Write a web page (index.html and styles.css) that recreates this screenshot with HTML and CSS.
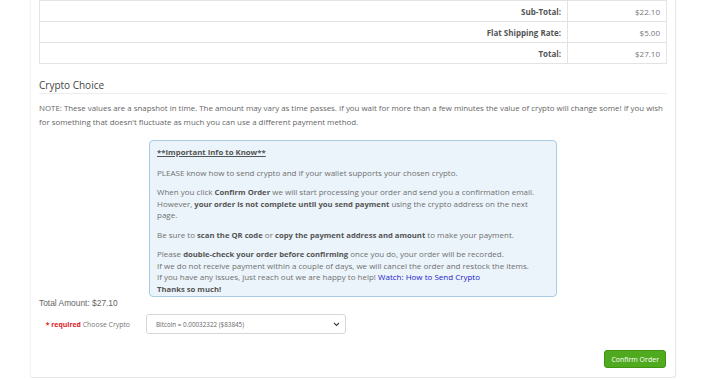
FILE: index.html
```html
<!DOCTYPE html>
<html lang="en">
<head>
    <meta charset="UTF-8" />
    <title>Checkout - Confirm Order</title>
    <link rel="stylesheet" href="styles.css">
</head>
<body>
    <div class="panel">
        <table class="totals">
            <tr>
                <td class="label">Sub-Total:</td>
                <td class="amount">$22.10</td>
            </tr>
            <tr>
                <td class="label">Flat Shipping Rate:</td>
                <td class="amount">$5.00</td>
            </tr>
            <tr>
                <td class="label">Total:</td>
                <td class="amount">$27.10</td>
            </tr>
        </table>

        <h3 class="section-title">Crypto Choice</h3>
        <p class="note">NOTE: These values are a snapshot in time. The amount may vary as time passes. If you wait for more than a few minutes the value of crypto will change some! If you wish for something that doesn't fluctuate as much you can use a different payment method.</p>

        <div class="info-box">
            <p class="info-title">**Important Info to Know**</p>
            <p>PLEASE know how to send crypto and if your wallet supports your chosen crypto.</p>
            <p>When you click <b>Confirm Order</b> we will start processing your order and send you a confirmation email. However, <b>your order is not complete until you send payment</b> using the crypto address on the next page.</p>
            <p>Be sure to <b>scan the QR code</b> or <b>copy the payment address and amount</b> to make your payment.</p>
            <p>Please <b>double-check your order before confirming</b> once you do, your order will be recorded.<br>
            If we do not receive payment within a couple of days, we will cancel the order and restock the items.<br>
            If you have any issues, just reach out we are happy to help! <a href="#">Watch: How to Send Crypto</a><br>
            <b>Thanks so much!</b></p>
        </div>

        <div class="total-amount">Total Amount: $27.10</div>

        <div class="form-row">
            <label class="form-label"><span class="required">* required</span> Choose Crypto</label>
            <div class="select-box">
                <span>Bitcoin = 0.00032322 ($83845)</span>
                <svg width="7" height="5" viewBox="0 0 7 5"><path d="M1 1l2.5 2.5L6 1" fill="none" stroke="#444" stroke-width="1.2"/></svg>
            </div>
        </div>

        <div class="buttons">
            <button class="btn-confirm">Confirm Order</button>
        </div>
    </div>
</body>
</html>
```

FILE: styles.css
```css
body, html {
    margin: 0;
    padding: 0;
    background: #ffffff;
    font-family: 'Open Sans', 'DejaVu Sans', sans-serif;
    color: #666;
    overflow: hidden;
}
.panel {
    width: 628px;
    margin-left: 30px;
    padding: 0 8px 9px 8px;
    border: 1px solid #e6e6e6;
    border-left-color: #f4f4f4;
    border-top: none;
    border-radius: 0 0 4px 4px;
    box-shadow: 0 1px 2px rgba(0, 0, 0, 0.05);
}
.totals {
    width: 100%;
    border-collapse: collapse;
    font-size: 8px;
}
.totals td {
    border: 1px solid #e3e3e3;
    height: 20px;
    padding: 0 6px;
    text-align: right;
}
.totals .label {
    font-weight: bold;
    color: #555;
}
.totals .amount {
    width: 86px;
    color: #777;
}
.section-title {
    margin: 14px 0 0 0;
    padding-bottom: 1px;
    font-size: 10px;
    font-weight: normal;
    color: #444;
    border-bottom: 1px solid #eeeeee;
}
.note {
    margin: 7px 0 0 0;
    font-size: 7.9px;
    line-height: 14px;
    color: #666;
}
.info-box {
    width: 392px;
    margin: 11px 0 0 110px;
    padding: 6px 7px 2px 7px;
    background: #ebf4fa;
    border: 1px solid #a9cce3;
    border-radius: 4px;
    font-size: 8px;
    line-height: 11.5px;
    color: #707070;
}
.info-box p {
    margin: 0 0 8px 0;
}
.info-box p:last-child {
    margin-bottom: 0;
}
.info-box b {
    font-size: 7.7px;
    line-height: 1;
    color: #555;
}
.info-box .info-title {
    font-size: 7.8px;
    font-weight: bold;
    text-decoration: underline;
    color: #555;
}
.info-box a {
    color: #2222cc;
    text-decoration: none;
}
.total-amount {
    margin-top: 1px;
    font-family: 'Liberation Sans', Arial, sans-serif;
    font-size: 8.4px;
    line-height: 10px;
    color: #666;
}
.form-row {
    display: flex;
    align-items: center;
    margin-top: 6px;
}
.form-label {
    width: 91px;
    text-align: right;
    font-size: 6.9px;
    color: #777;
}
.required {
    color: #e0222b;
    font-weight: bold;
}
.select-box {
    display: flex;
    align-items: center;
    justify-content: space-between;
    width: 184px;
    height: 18px;
    margin-left: 16px;
    padding: 0 5px 0 9px;
    border: 1px solid #d6d6d6;
    border-radius: 3px;
    font-size: 6.3px;
    color: #666;
}
.buttons {
    display: flex;
    justify-content: flex-end;
    margin-top: 16px;
    padding-right: 1px;
}
.btn-confirm {
    background: #4faa1f;
    border: 1px solid #3f9412;
    border-radius: 3px;
    color: #fff;
    font-family: 'Open Sans', sans-serif;
    font-size: 7px;
    height: 18px;
    padding: 0 6px;
    cursor: pointer;
}
```
